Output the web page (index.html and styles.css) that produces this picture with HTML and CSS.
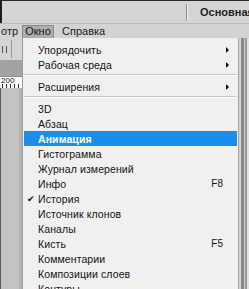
FILE: index.html
```html
<!DOCTYPE html>
<html lang="ru">
<head>
<meta charset="utf-8">
<link rel="stylesheet" href="styles.css">
</head>
<body>
<div class="app">
  <div class="topbar">
    <div class="topbar-space"></div>
    <div class="divider"></div>
    <div class="workspace">Основная р</div>
  </div>
  <div class="menubar">
    <span class="mb-item mb-cut">отр</span>
    <span class="mb-item mb-active">Окно</span>
    <span class="mb-item">Справка</span>
  </div>
  <div class="main">
    <div class="leftstrip">
      <div class="ls-tools"><span class="ls-icon"></span><span class="ls-sep"></span></div>
      <div class="ls-dark"></div>
      <div class="ls-ruler"><span class="ruler-num">200</span><span class="ticks"></span></div>
      <div class="ls-body"></div>
    </div>
    <div class="spacer"></div>
    <div class="rightstrip">
      <div class="rs-a"></div><div class="rs-b"></div><div class="rs-c"></div><div class="rs-d"></div><div class="rs-e"></div>
    </div>
  </div>

  <div class="dropdown">
    <div class="item"><span class="label">Упорядочить</span><span class="arrow"></span></div>
    <div class="item"><span class="label">Рабочая среда</span><span class="arrow"></span></div>
    <div class="sep"></div>
    <div class="item"><span class="label">Расширения</span><span class="arrow"></span></div>
    <div class="sep"></div>
    <div class="item"><span class="label">3D</span></div>
    <div class="item"><span class="label">Абзац</span></div>
    <div class="item active"><span class="label">Анимация</span></div>
    <div class="item"><span class="label">Гистограмма</span></div>
    <div class="item"><span class="label">Журнал измерений</span></div>
    <div class="item"><span class="label">Инфо</span><span class="key">F8</span></div>
    <div class="item"><span class="check">✔</span><span class="label">История</span></div>
    <div class="item"><span class="label">Источник клонов</span></div>
    <div class="item"><span class="label">Каналы</span></div>
    <div class="item"><span class="label">Кисть</span><span class="key">F5</span></div>
    <div class="item"><span class="label">Комментарии</span></div>
    <div class="item"><span class="label">Композиции слоев</span></div>
    <div class="item"><span class="label">Контуры</span></div>
  </div>
</div>
</body>
</html>
```
FILE: styles.css
```css
html, body {
  margin: 0;
  padding: 0;
}
body {
  width: 249px;
  height: 289px;
  overflow: hidden;
  background: #c4c4c4;
  font-family: "Liberation Sans", Arial, sans-serif;
}
.app {
  position: relative;
  width: 249px;
  height: 289px;
  display: flex;
  flex-direction: column;
  overflow: hidden;
}
.topbar {
  height: 22px;
  background: #d5d5d5;
  border-top: 1px solid #2a2a2a;
  border-left: 2px solid #1e1e1e;
  display: flex;
  align-items: center;
  flex: none;
}
.topbar-space {
  width: 184px;
  flex: none;
}
.divider {
  width: 1px;
  height: 17px;
  background: #8a8a8a;
  border-right: 1px solid #f2f2f2;
  flex: none;
}
.workspace {
  margin-left: 12px;
  font-weight: bold;
  font-size: 11px;
  color: #1e1e1e;
  white-space: nowrap;
}
.menubar {
  height: 14px;
  background: #d3d3d3;
  border-top: 1px solid #b9b9b9;
  display: flex;
  align-items: flex-end;
  flex: none;
  font-size: 11px;
  color: #1a1a1a;
}
.mb-item {
  height: 12px;
  line-height: 11px;
  white-space: nowrap;
}
.mb-cut {
  width: 21px;
  margin-left: 1px;
  overflow: hidden;
}
.mb-active {
  width: 30px;
  text-align: center;
  background: #adadad;
  border: 1px solid #8c8c8c;
  border-bottom: none;
  margin-right: 8px;
}
.main {
  flex: 1;
  display: flex;
}
.leftstrip {
  width: 22px;
  flex: none;
  display: flex;
  flex-direction: column;
}
.ls-tools {
  height: 22px;
  background: #d4d4d4;
  display: flex;
  align-items: center;
  gap: 4px;
  padding-left: 2px;
}
.ls-icon {
  width: 3px;
  height: 7px;
  border-left: 1px solid #555;
  border-right: 1px solid #555;
}
.ls-sep {
  width: 1px;
  height: 18px;
  background: #9a9a9a;
}
.ls-dark {
  height: 16px;
  background: #a2a2a2;
  border-bottom: 1px solid #8d8d8d;
}
.ls-ruler {
  height: 11px;
  background: #fafafa;
  position: relative;
  font-size: 8px;
  color: #222;
  line-height: 8px;
  overflow: hidden;
}
.ruler-num {
  position: absolute;
  left: 1px;
  top: 0;
}
.ticks {
  position: absolute;
  left: 2px;
  right: 0;
  bottom: 0;
  height: 4px;
  background: repeating-linear-gradient(90deg, #333 0 1px, transparent 1px 4px);
}
.ls-body {
  flex: 1;
  background: #c3c3c3;
  border-left: 1px solid #5a5a5a;
  border-right: 3px solid #b2b2b2;
}
.spacer {
  flex: 1;
}
.rightstrip {
  width: 10px;
  flex: none;
  display: flex;
}
.rs-a { width: 2px; background: #d6d6d6; }
.rs-b { width: 3px; background: #8a8a8a; }
.rs-c { width: 1px; background: #c9c9c9; }
.rs-d { width: 2px; background: #9a9a9a; }
.rs-e { width: 2px; background: #e2e2e2; }

.dropdown {
  position: absolute;
  left: 22px;
  top: 38px;
  width: 215px;
  height: 260px;
  background: #f0f0f0;
  border-left: 1px solid #9b9b9b;
  border-right: 1px solid #a8a8a8;
  padding-top: 4px;
  font-size: 10.5px;
  color: #141414;
  box-shadow: 1px 0 0 #cfcfcf;
}
.item {
  height: 15px;
  display: flex;
  align-items: center;
  padding-left: 14px;
  padding-right: 14px;
  position: relative;
  margin: 0 1px;
}
.label {
  flex: 1;
  white-space: nowrap;
  letter-spacing: 0.1px;
}
.item.active {
  background: #1a8ee9;
  color: #fff;
  font-weight: bold;
}
.arrow {
  width: 0;
  height: 0;
  border-left: 3px solid #111;
  border-top: 3px solid transparent;
  border-bottom: 3px solid transparent;
  margin-right: -6px;
}
.key {
  font-size: 10px;
}
.check {
  position: absolute;
  left: 3px;
  font-size: 9px;
}
.sep {
  height: 7px;
  margin: 0 1px;
  position: relative;
}
.sep::after {
  content: "";
  position: absolute;
  left: 0;
  right: 0;
  top: 2px;
  height: 1px;
  background: #c6c6c6;
  border-bottom: 1px solid #fff;
}
```
